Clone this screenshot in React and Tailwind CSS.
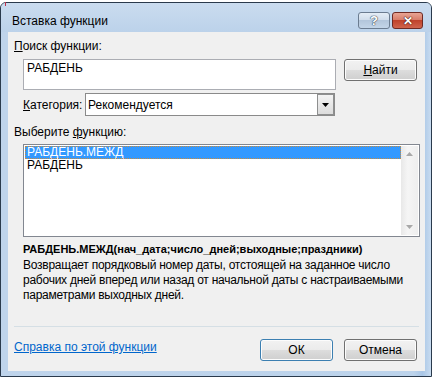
import React from 'react';

const btn =
  'flex h-[22px] w-[73px] items-center justify-center rounded-[3px] border text-[12px] leading-[16px] text-black bg-[linear-gradient(#f2f2f2_0%,#ebebeb_50%,#dddddd_50%,#cfcfcf_100%)] shadow-[inset_0_0_0_1px_#fcfcfc]';

const InsertFunctionDialog = () => {
  return (
    <div className="relative h-[380px] w-[436px] bg-white font-['Liberation_Sans',Arial,sans-serif] text-[12px] text-black">
      <div className="absolute left-[5px] top-0 h-[4px] w-px bg-[#c0304a]" />
      <div className="mt-[2px] flex h-[375px] w-[432px] flex-col rounded-t-[6px] border border-[#2a3a4c] bg-[linear-gradient(90deg,#bfd4eb_0%,#bcd3eb_96%,#a9c6e6_98%,#c9dcf0_100%)] pl-[7px] pr-[6px]">
        {/* title bar */}
        <div className="-ml-[7px] -mr-[6px] flex h-[29px] items-start rounded-t-[5px] bg-[linear-gradient(#cadcef,#bcd2ea)] pl-[11px] pr-[8px]">
          <span className="mt-[10px] leading-[16px]">Вставка функции</span>
          <div className="ml-auto mt-[9px] flex gap-[2px]">
            <div className="flex h-[17px] w-[32px] items-center justify-center rounded-[3px] border border-[#6b7c90] bg-[linear-gradient(#e4edf6_0%,#cfdcea_50%,#b3c6db_50%,#c3d5e8_100%)] text-[13px] font-bold leading-none text-white [text-shadow:0_0_1px_#3a4a5c,0_0_1px_#3a4a5c,0_0_1px_#3a4a5c]">
              ?
            </div>
            <div className="flex h-[17px] w-[31px] items-center justify-center rounded-[3px] border border-[#6e2a24] bg-[linear-gradient(#e8a493_0%,#d67966_50%,#c0432c_50%,#d0644d_100%)] text-[12px] font-bold leading-none text-white [text-shadow:0_0_1px_#4a1a14,0_0_1px_#4a1a14,0_0_1px_#4a1a14]">
              ✕
            </div>
          </div>
        </div>

        {/* client area */}
        <div className="flex h-[339px] w-[417px] flex-col bg-[#f0f0f0] pt-[6px]">
          <div className="pl-[6px] leading-[16px]">
            <span className="underline">П</span>оиск функции:
          </div>

          <div className="mt-[5px] flex items-start">
            <div className="ml-[15px] h-[31px] w-[313px] border border-[#abadb3] bg-white px-[3px] leading-[16px]">
              РАБДЕНЬ
            </div>
            <button className={`${btn} ml-auto mr-[8px] border-[#707070]`}>
              <span className="underline">Н</span>айти
            </button>
          </div>

          <div className="mt-[3px] flex items-center">
            <span className="ml-[15px] w-[62px] leading-[16px]">
              <span className="underline">К</span>атегория:
            </span>
            <div className="flex h-[23px] w-[250px] items-center border border-[#8a8a8a] bg-white pl-[2px]">
              <span className="leading-[16px]">Рекомендуется</span>
              <div className="ml-auto flex h-[21px] w-[17px] items-center justify-center border border-[#8e8f8f] bg-[linear-gradient(#f3f3f3,#dcdcdc)]">
                <svg width="7" height="4" viewBox="0 0 7 4">
                  <path d="M0 0h7L3.5 4z" fill="#000" />
                </svg>
              </div>
            </div>
          </div>

          <div className="mt-[8px] pl-[6px] leading-[16px]">
            Выберите <span className="underline">ф</span>ункцию:
          </div>

          <div className="ml-[15px] mt-[4px] flex h-[93px] w-[397px] border border-[#828790] bg-white p-px">
            <div className="flex flex-1 flex-col">
              <div className="h-[13px] bg-[#3399ff] pl-[2px] leading-[13px] text-white outline-1 outline-dotted -outline-offset-1 outline-[#c98a3c]">
                РАБДЕНЬ.МЕЖД
              </div>
              <div className="h-[13px] pl-[2px] leading-[13px]">РАБДЕНЬ</div>
            </div>
            <div className="flex w-[17px] flex-col items-center justify-between bg-[linear-gradient(90deg,#e8e8e8,#f5f5f5_40%,#eeeeee)] py-[6px]">
              <svg width="7" height="4" viewBox="0 0 7 4">
                <path d="M3.5 0L7 4H0z" fill="#a8a8a8" />
              </svg>
              <svg width="7" height="4" viewBox="0 0 7 4">
                <path d="M0 0h7L3.5 4z" fill="#a8a8a8" />
              </svg>
            </div>
          </div>

          <div className="mt-[4px] whitespace-nowrap pl-[15px] text-[11px] font-bold leading-[16px]">
            РАБДЕНЬ.МЕЖД(нач_дата;число_дней;выходные;праздники)
          </div>
          <p className="mt-px whitespace-nowrap pl-[15px] leading-[15px] tracking-[-0.25px]">
            Возвращает порядковый номер даты, отстоящей на заданное число
            <br />
            рабочих дней вперед или назад от начальной даты с настраиваемыми
            <br />
            параметрами выходных дней.
          </p>

          <div className="ml-[6px] mt-[23px] h-px w-[405px] bg-[#d5dfe5]" />

          <div className="mt-[12px] flex items-start">
            <a href="#" className="ml-[6px] leading-[16px] text-[#0066cc] underline">
              Справка по этой функции
            </a>
            <button className={`${btn} ml-auto border-[#3c7fb1] shadow-[inset_0_0_0_1px_#c4e5f6]`}>
              ОК
            </button>
            <button className={`${btn} ml-[11px] mr-[8px] border-[#707070]`}>Отмена</button>
          </div>
        </div>
      </div>
    </div>
  );
};

export default function App() {
  return <InsertFunctionDialog />;
}
